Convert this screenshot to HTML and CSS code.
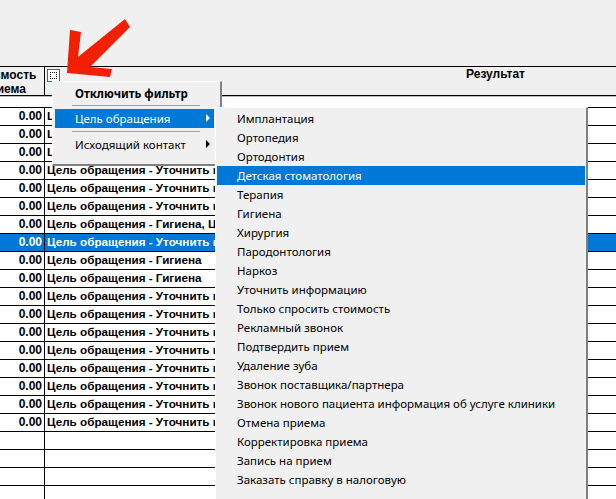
FILE: index.html
```html
<!DOCTYPE html>
<html lang="ru">
<head>
<meta charset="utf-8">
<title>Результат</title>
<link rel="stylesheet" href="styles.css">
</head>
<body>
<div class="screen">
  <div class="toolbar"></div>
  <div class="head">
    <div class="col-a head-a"><div class="head-a-text">Стоимость<br>приема</div></div>
    <div class="col-b head-b"><span class="filter-btn"><span class="filter-dots"></span></span></div>
    <div class="head-c"><span>Результат</span></div>
  </div>
  <div class="gap-row"></div>
  <div class="rows">
    <div class="row"><div class="col-a">0.00</div><div class="col-b">Цель обращения - Уточнить информацию</div></div>
    <div class="row"><div class="col-a">0.00</div><div class="col-b">Цель обращения - Уточнить информацию</div></div>
    <div class="row"><div class="col-a">0.00</div><div class="col-b">Цель обращения - Уточнить информацию</div></div>
    <div class="row"><div class="col-a">0.00</div><div class="col-b">Цель обращения - Уточнить информацию</div></div>
    <div class="row"><div class="col-a">0.00</div><div class="col-b">Цель обращения - Уточнить информацию</div></div>
    <div class="row"><div class="col-a">0.00</div><div class="col-b">Цель обращения - Уточнить информацию</div></div>
    <div class="row"><div class="col-a">0.00</div><div class="col-b">Цель обращения - Гигиена, Цель обращения</div></div>
    <div class="row selected"><div class="col-a">0.00</div><div class="col-b">Цель обращения - Уточнить информацию</div></div>
    <div class="row"><div class="col-a">0.00</div><div class="col-b">Цель обращения - Гигиена</div></div>
    <div class="row"><div class="col-a">0.00</div><div class="col-b">Цель обращения - Гигиена</div></div>
    <div class="row"><div class="col-a">0.00</div><div class="col-b">Цель обращения - Уточнить информацию</div></div>
    <div class="row"><div class="col-a">0.00</div><div class="col-b">Цель обращения - Уточнить информацию</div></div>
    <div class="row"><div class="col-a">0.00</div><div class="col-b">Цель обращения - Уточнить информацию</div></div>
    <div class="row"><div class="col-a">0.00</div><div class="col-b">Цель обращения - Уточнить информацию</div></div>
    <div class="row"><div class="col-a">0.00</div><div class="col-b">Цель обращения - Уточнить информацию</div></div>
    <div class="row"><div class="col-a">0.00</div><div class="col-b">Цель обращения - Уточнить информацию</div></div>
    <div class="row"><div class="col-a">0.00</div><div class="col-b">Цель обращения - Уточнить информацию</div></div>
    <div class="row"><div class="col-a">0.00</div><div class="col-b">Цель обращения - Уточнить информацию</div></div>
    <div class="row"><div class="col-a"></div><div class="col-b"></div></div>
    <div class="row"><div class="col-a"></div><div class="col-b"></div></div>
    <div class="row"><div class="col-a"></div><div class="col-b"></div></div>
    <div class="row"><div class="col-a"></div><div class="col-b"></div></div>
  </div>

  <div class="menu menu-main">
    <div class="item strong">Отключить фильтр</div>
    <div class="sep"></div>
    <div class="item active has-sub">Цель обращения</div>
    <div class="sep sep-low"></div>
    <div class="item has-sub">Исходящий контакт</div>
  </div>

  <div class="menu menu-sub">
    <div class="subitem">Имплантация</div>
    <div class="subitem">Ортопедия</div>
    <div class="subitem">Ортодонтия</div>
    <div class="subitem active">Детская стоматология</div>
    <div class="subitem">Терапия</div>
    <div class="subitem">Гигиена</div>
    <div class="subitem">Хирургия</div>
    <div class="subitem">Пародонтология</div>
    <div class="subitem">Наркоз</div>
    <div class="subitem">Уточнить информацию</div>
    <div class="subitem">Только спросить стоимость</div>
    <div class="subitem">Рекламный звонок</div>
    <div class="subitem">Подтвердить прием</div>
    <div class="subitem">Удаление зуба</div>
    <div class="subitem">Звонок поставщика/партнера</div>
    <div class="subitem">Звонок нового пациента информация об услуге клиники</div>
    <div class="subitem">Отмена приема</div>
    <div class="subitem">Корректировка приема</div>
    <div class="subitem">Запись на прием</div>
    <div class="subitem">Заказать справку в налоговую</div>
  </div>

  <svg class="arrow" width="72" height="64" viewBox="0 0 72 64" aria-hidden="true">
    <path fill="#f32000" d="M10 15 L21 17 L18 42 L65 4 L70 12 L30 52 L52 54 L50 62 L7 58 Z"/>
  </svg>
</div>
</body>
</html>
```
FILE: styles.css
```css
* { box-sizing: border-box; }
html, body { margin: 0; padding: 0; }
body { width: 616px; height: 499px; overflow: hidden; background: #fff; }
.screen {
  position: relative;
  width: 616px;
  height: 499px;
  overflow: hidden;
  font-family: "Liberation Sans", Arial, sans-serif;
  font-size: 12px;
  font-weight: 700;
  color: #000;
}
.toolbar { height: 66px; background: #f0f0f0; }
.head {
  display: flex;
  height: 30px;
  background: #f0f0f0;
  border-top: 1px solid #000;
  border-bottom: 1px solid #000;
}
.col-a { width: 45px; flex: none; border-right: 1px solid #000; padding-right: 2px; text-align: right; }
.col-b { flex: 1; min-width: 0; padding-left: 2px; white-space: nowrap; overflow: hidden; }
.head-a { padding: 1px 0 0; overflow: hidden; }
.head-a-text { width: 66px; margin-left: -29px; line-height: 14px; text-align: center; white-space: nowrap; }
.head-b { flex: none; width: 176px; padding: 2px 0 0 2px; }
.head-c { flex: 1; text-align: center; line-height: 15px; }
.head-c span { position: relative; left: 77px; }
.filter-btn {
  display: block;
  width: 13px;
  height: 13px;
  border: 1px solid #0078d7;
  background: #fff;
  padding: 2px;
}
.filter-dots { display: block; width: 7px; height: 7px; border: 1px dotted #000; }
.gap-row { height: 12px; border-top: 1px solid #b8b8b8; border-bottom: 1px solid #000; background: #fff; }
.row { display: flex; height: 18px; line-height: 16px; font-size: 11.7px; border-bottom: 1px solid #000; }
.row .col-a { height: 18px; font-size: 12px; }
.selected { background: #0078d7; color: #fff; }

.menu {
  position: absolute;
  background: #f0f0f0;
  border: 1px solid #fff;
  border-right: 2px solid #808080;
  border-bottom: 2px solid #808080;
  font-family: "Noto Sans", sans-serif;
  font-weight: 400;
  font-size: 11.5px;
  color: #000;
}
.menu-main { left: 52px; top: 81px; width: 170px; height: 85px; padding: 2px 6px 2px 2px; }
.menu-sub { left: 215px; top: 107px; width: 373px; height: 400px; padding: 1px; }
.item { height: 19px; line-height: 19px; padding-left: 20px; position: relative; }
.strong { font-weight: 700; }
.sep { height: 1px; margin: 2px 14px 3px 17px; background: #a0a0a0; }
.sep-low { margin-top: 3px; margin-bottom: 3px; }
.item.active { background: #0078d7; color: #fff; }
.has-sub::after {
  content: "";
  position: absolute;
  right: 4px;
  top: 5px;
  border-left: 4px solid currentColor;
  border-top: 4px solid transparent;
  border-bottom: 4px solid transparent;
}
.subitem { height: 19px; line-height: 19px; padding-left: 20px; white-space: nowrap; }
.subitem.active { background: #0078d7; color: #fff; }
.arrow { position: absolute; left: 60px; top: 15px; }
```
